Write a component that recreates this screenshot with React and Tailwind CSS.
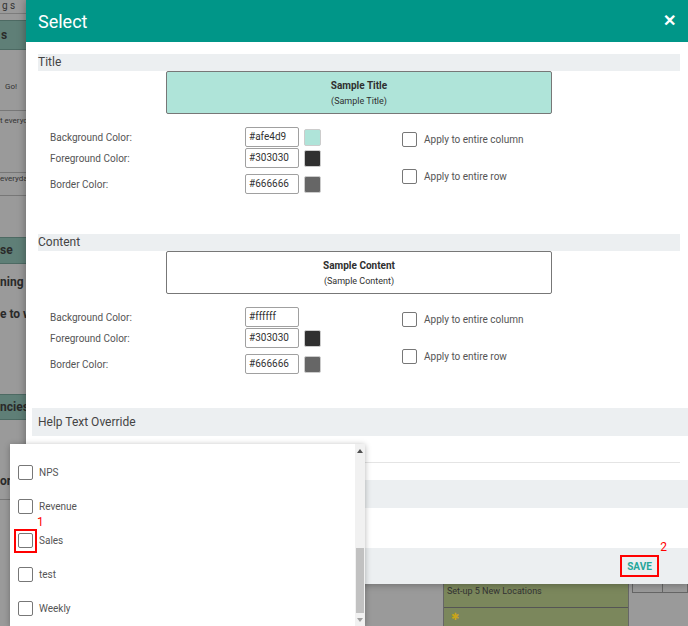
import React from "react";

const font = { fontFamily: "Roboto, 'Noto Sans', Arial, sans-serif" };

const Box = ({ className = "" }) => (
  <span className={`block w-[15px] h-[15px] rounded-[2px] border-[1.5px] border-[#777] bg-white ${className}`} />
);

// one colour row: label, hex input, swatch
const ColorRow = ({ label, value, swatch, className = "" }) => (
  <div className={`flex items-center h-[20px] ${className}`}>
    <span className="w-[207px] pl-[12px] text-[10px] text-[#555]">{label}</span>
    <span className="w-[54px] h-[20px] border border-[#a0a0a0] rounded-[2px] px-[3px] text-[10px] leading-[18px] text-[#333]">
      {value}
    </span>
    {swatch ? (
      <span className="ml-[5px] w-[17px] h-[17px] rounded-[2px] border border-[#ccc]" style={{ background: swatch }} />
    ) : null}
  </div>
);

const Apply = ({ label, className = "" }) => (
  <div className={`flex items-center gap-[7px] ${className}`}>
    <Box />
    <span className="text-[10px] text-[#555]">{label}</span>
  </div>
);

const Section = ({ title, sample, bg, rows, first }) => (
  <div className={first ? "mt-[12px]" : "mt-[40px]"}>
    <div className="h-[17px] bg-[#eceff1] text-[12px] leading-[17px] text-[#444] mr-[8px]">{title}</div>
    <div
      className="ml-[128px] w-[386px] h-[43px] border border-[#777] rounded-[2px] flex flex-col items-center justify-center"
      style={{ background: bg }}
    >
      <span className="text-[10px] font-bold text-[#303030] leading-[14px]">Sample {sample}</span>
      <span className="text-[9px] text-[#303030] leading-[12px] mt-[2px]">(Sample {sample})</span>
    </div>
    <div className="flex mt-[13px]">
      <div className="w-[364px]">
        <ColorRow label="Background Color:" value={rows[0]} swatch={rows[0] === "#ffffff" ? null : rows[0]} />
        <ColorRow label="Foreground Color:" value="#303030" swatch="#303030" className="mt-[1px]" />
        <ColorRow label="Border Color:" value="#666666" swatch="#666666" className="mt-[6px]" />
      </div>
      <div>
        <Apply label="Apply to entire column" className="mt-[5px]" />
        <Apply label="Apply to entire row" className="mt-[22px]" />
      </div>
    </div>
  </div>
);

export default function App() {
  return (
    <div className="relative w-[688px] h-[626px] overflow-hidden bg-[#9a9a9a]" style={font}>
      {/* dimmed page underneath */}
      <div className="flex flex-col h-full">
        <div className="h-[14px] border-b border-[#7c7c7c] text-[10px] leading-[12px] text-[#333] pl-[2px]">g s</div>
        <div className="flex flex-1">
          <div className="w-[440px] flex flex-col pt-[6px]">
            <div className="h-[30px] bg-[#5f7f77] border-y border-[#4d6a63] text-[12px] font-bold text-[#2a2a2a] leading-[28px] pl-[1px]">s</div>
            <div className="h-[61px] border-b border-[#777] text-[8px] text-[#333] pl-[5px] pt-[31px]">Go!</div>
            <div className="h-[62px] border-b border-[#777] text-[8px] text-[#333] pt-[4px]">t everyone</div>
            <div className="h-[23px] border-b border-[#777] text-[8px] text-[#333] pt-[0px]">everyday</div>
            <div className="h-[41px]" />
            <div className="h-[27px] bg-[#5f7f77] border-y border-[#4d6a63] text-[12px] font-bold text-[#2a2a2a] leading-[25px]">se</div>
            <div className="h-[41px] text-[12px] font-bold text-[#2a2a2a] pt-[9px]">ning t</div>
            <div className="h-[89px] text-[12px] font-bold text-[#2a2a2a]">e to w</div>
            <div className="h-[26px] bg-[#5f7f77] border-y border-[#4d6a63] text-[12px] font-bold text-[#2a2a2a] leading-[24px]">ncies</div>
            <div className="h-[80px] border-b border-[#777] text-[12px] font-bold text-[#2a2a2a] pt-[52px]">or</div>
            <div className="flex-1 flex justify-end items-start pr-[2px]">
              <div className="w-[75px] h-[9px] border border-t-0 border-[#777] rounded-b-[2px]" />
            </div>
          </div>
          <div className="ml-[3px] w-[186px] flex flex-col justify-end">
            <div className="h-[42px] bg-[#7b875c] border-x border-[#666]">
              <div className="h-[24px] border-b border-[#555] text-[9px] text-[#333] pl-[3px] pt-[1px]">Set-up 5 New Locations</div>
              <div className="pl-[7px] pt-[4px] text-[10px] text-[#c9a419] leading-none">✱</div>
            </div>
          </div>
          <div className="ml-[3px] flex-1 flex flex-col justify-end">
            <div className="h-[42px] flex items-start">
              <div className="w-[31px] h-[9px] border border-t-0 border-[#666]" />
              <div className="flex-1 h-[9px] border border-t-0 border-l-0 border-[#666]" />
            </div>
          </div>
        </div>
      </div>

      {/* modal */}
      <div className="absolute left-[26px] top-0 w-[662px] h-[584px] bg-white flex flex-col shadow-[0_0_8px_rgba(0,0,0,0.35)]">
        <div className="h-[42px] bg-[#009688] flex items-center justify-between pl-[12px] pr-[12px] shrink-0">
          <span className="text-[18px] text-white">Select</span>
          <span className="text-[16px] font-bold text-white leading-none">✕</span>
        </div>
        <div className="pl-[12px] flex-1">
          <Section first title="Title" sample="Title" bg="#afe4d9" rows={["#afe4d9"]} />
          <Section title="Content" sample="Content" bg="#ffffff" rows={["#ffffff"]} />
          <div className="mt-[34px] -ml-[6px] h-[28px] bg-[#eceff1] pl-[6px] text-[12px] leading-[28px] text-[#444]">
            Help Text Override
          </div>
          <div className="h-[27px] border-b border-[#e4e4e4] mr-[8px]" />
          <div className="mt-[17px] -ml-[6px] h-[28px] bg-[#eceff1]" />
        </div>
        <div className="h-[36px] bg-[#eceff1] flex items-center justify-end pr-[29px] shrink-0">
          <div className="relative border-2 border-[#ff0000] w-[39px] h-[22px] flex items-center justify-center">
            <span className="text-[10px] font-bold text-[#26a69a]">SAVE</span>
            <span className="absolute -right-[10px] -top-[19px] text-[12px] text-[#ff0000]">2</span>
          </div>
        </div>
      </div>

      {/* open dropdown list */}
      <div className="absolute left-[10px] top-[444px] w-[355px] h-[182px] bg-white shadow-[0_1px_6px_rgba(0,0,0,0.3)] flex overflow-hidden">
        <div className="flex-1 -mt-[26px]">
          {["", "NPS", "Revenue", "Sales", "test", "Weekly"].map((t, i) => (
            <div key={i} className={`${i === 0 ? "h-[37px]" : "h-[34px]"} flex items-center pl-[8px] gap-[6px]`}>
              {t === "Sales" ? (
                <span className="relative">
                  <span className="absolute -left-[4px] -top-[4px] w-[23px] h-[24px] border-2 border-[#ff0000]" />
                  <span className="absolute left-[19px] -top-[17px] text-[12px] text-[#ff0000] leading-none">1</span>
                  <Box />
                </span>
              ) : (
                <Box />
              )}
              {t ? <span className="text-[10px] text-[#555]">{t}</span> : null}
            </div>
          ))}
        </div>
        <div className="w-[10px] bg-[#f1f1f1] flex flex-col items-center">
          <span className="mt-[5px] w-0 h-0 border-x-[3px] border-x-transparent border-b-[4px] border-b-[#505050]" />
          <div className="mt-[95px] w-[8px] h-[65px] bg-[#c1c1c1]" />
          <span className="mt-[5px] w-0 h-0 border-x-[3px] border-x-transparent border-t-[4px] border-t-[#a0a0a0]" />
        </div>
      </div>
    </div>
  );
}
